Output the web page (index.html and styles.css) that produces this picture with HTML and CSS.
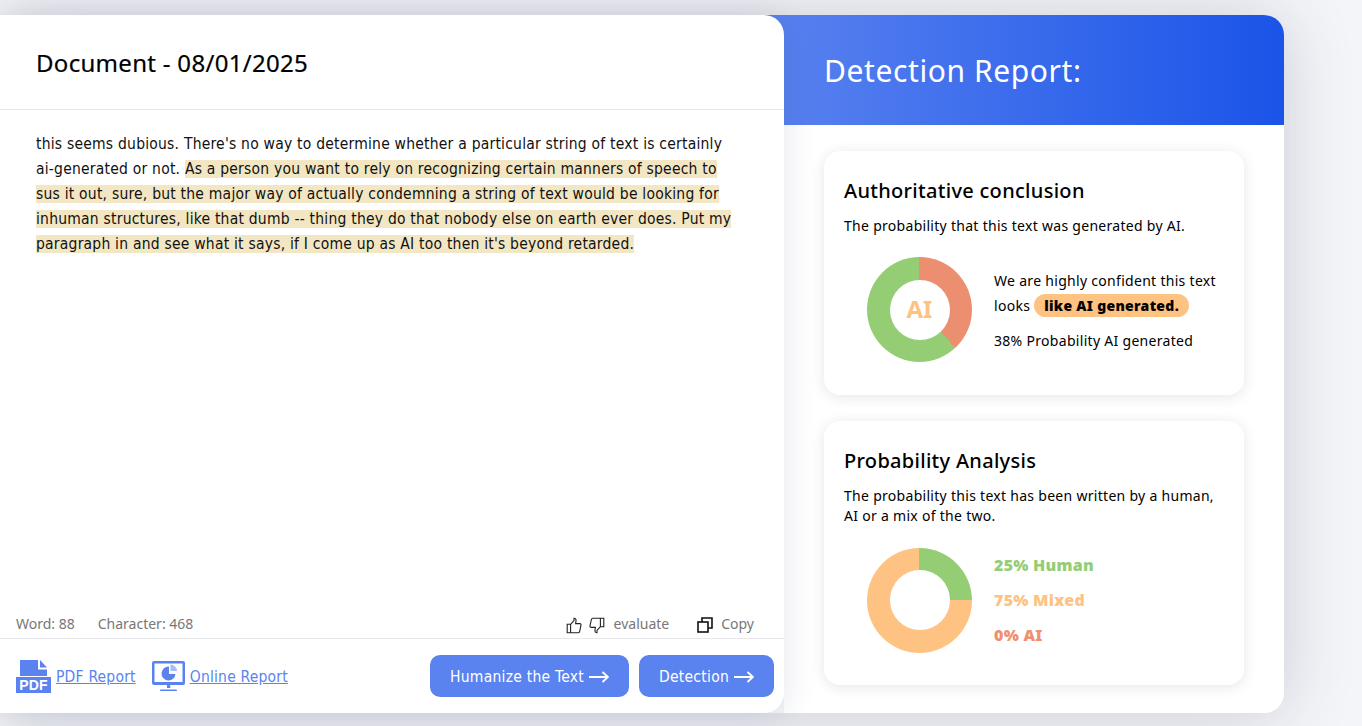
FILE: index.html
```html
<!DOCTYPE html>
<html lang="en">
<head>
<meta charset="utf-8">
<title>Detection Report</title>
<link rel="stylesheet" href="styles.css">
</head>
<body>
<main class="page">
  <section class="doc">
    <header class="doc-head"><h1>Document - 08/01/2025</h1></header>
    <div class="doc-body">
      <p>this seems dubious. There's no way to determine whether a particular string of text is certainly ai-generated or not. <mark>As a person you want to rely on recognizing certain manners of speech to sus it out, sure, but the major way of actually condemning a string of text would be looking for inhuman structures, like that dumb -- thing they do that nobody else on earth ever does. Put my paragraph in and see what it says, if I come up as AI too then it's beyond retarded.</mark></p>
    </div>
    <div class="doc-stats">
      <div class="counts"><span>Word: 88</span><span>Character: 468</span></div>
      <div class="tools">
        <svg class="ico" width="16" height="17" viewBox="0 0 16 17" fill="none" stroke="#222" stroke-width="1.1"><path d="M4.6 7.2v8.6H1.2V7.2zM4.6 7.4 8 3.6V1.2c1.6 0 2.2 1.300 2 2.800L9.600 6.600h4.200c1 0 1.400.8 1.200 1.600l-1.400 6.400c-.2.800-.7 1.200-1.500 1.200H4.600"/></svg>
        <svg class="ico thumb-down" width="16" height="17" viewBox="0 0 16 17" fill="none" stroke="#222" stroke-width="1.1"><path d="M11.400 9.800V1.200h3.400v8.600zM11.400 9.600 8 13.400v2.400c-1.600 0-2.200-1.300-2-2.800l.4-2.600H2.200c-1 0-1.400-.8-1.200-1.600l1.400-6.400c.2-.8.7-1.200 1.500-1.200h7.500"/></svg>
        <span class="tool-label">evaluate</span>
        <svg class="ico copy" width="16" height="16" viewBox="0 0 16 16" fill="none" stroke="#111" stroke-width="1.600"><rect x="1" y="5" width="10" height="10"/><path d="M5 5V1h10v10h-4"/></svg>
        <span class="tool-label copy-label">Copy</span>
      </div>
    </div>
    <footer class="doc-foot">
      <div class="links">
        <a class="link" href="#">
          <svg width="35" height="33" viewBox="0 0 35 33"><path d="M4 0h18v9.500h9V16H4z" fill="#5b83f0"/><path d="M24 0l7 7.500h-7z" fill="#5b83f0"/><rect y="17" width="35" height="16" fill="#5b83f0"/><text x="17.500" y="30" class="pdf-text">PDF</text></svg>
          <span class="link-text">PDF Report</span>
        </a>
        <a class="link" href="#">
          <svg width="33" height="31" viewBox="0 0 33 31"><path d="M2 0h29a2 2 0 0 1 2 2v20a2 2 0 0 1-2 2H2a2 2 0 0 1-2-2V2a2 2 0 0 1 2-2z" fill="#5b83f0"/><rect x="2.500" y="2.500" width="28" height="18.500" fill="#fff"/><path d="M17 5.500a7 7 0 1 0 6.500 7.500H17z" fill="#5b83f0"/><path d="M18.500 3.500a7 7 0 0 1 6.500 6.500h-6.500z" fill="#a9bdf5"/><path d="M15 24h3l.5 3h-3.500zM9 28.500h15c.500 0 1 .5 1 1.500H8c0-1 .5-1.500 1-1.500z" fill="#5b83f0"/></svg>
          <span class="link-text">Online Report</span>
        </a>
      </div>
      <div class="actions">
        <button class="btn">Humanize the Text <svg width="20" height="12" viewBox="0 0 20 12" fill="none" stroke="#fff" stroke-width="1.900"><path d="M0 6h18.500M13.500 1l5.500 5-5.500 5"/></svg></button>
        <button class="btn">Detection <svg width="20" height="12" viewBox="0 0 20 12" fill="none" stroke="#fff" stroke-width="1.900"><path d="M0 6h18.500M13.500 1l5.500 5-5.500 5"/></svg></button>
      </div>
    </footer>
  </section>
  <aside class="report">
    <header class="report-head"><h2>Detection Report:</h2></header>
    <div class="report-body">
      <article class="card card-a">
        <h3>Authoritative conclusion</h3>
        <p class="card-desc">The probability that this text was generated by AI.</p>
        <div class="chart-row">
          <div class="donut donut-ai"><span class="donut-hole donut-label">AI</span></div>
          <div class="verdict">
            <p class="verdict-text">We are highly confident this text looks <b class="pill">like AI generated.</b></p>
            <p class="verdict-prob">38% Probability AI generated</p>
          </div>
        </div>
      </article>
      <article class="card card-b">
        <h3>Probability Analysis</h3>
        <p class="card-desc">The probability this text has been written by a human, AI or a mix of the two.</p>
        <div class="chart-row">
          <div class="donut donut-mix"><span class="donut-hole"></span></div>
          <ul class="legend">
            <li class="human">25% Human</li>
            <li class="mixed">75% Mixed</li>
            <li class="ai">0% AI</li>
          </ul>
        </div>
      </article>
    </div>
  </aside>
</main>
</body>
</html>
```
FILE: styles.css
```css
* { box-sizing: border-box; }
html, body { margin: 0; height: 100%; overflow: hidden; }
body {
  background: #f4f5f8;
  font-family: "Noto Sans", sans-serif;
  color: #000;
}
h1, h2, h3, p, ul { margin: 0; padding: 0; }
.page {
  display: flex;
  align-items: stretch;
  height: 698px;
  margin-top: 15px;
  width: 1284px;
  border-radius: 0 20px 20px 0;
  box-shadow: 0 2px 70px rgba(40, 50, 90, .2);
}
.doc {
  position: relative;
  z-index: 2;
  flex: 0 0 784px;
  display: flex;
  flex-direction: column;
  background: #fff;
  border-radius: 0 20px 20px 0;
  box-shadow: 0 2px 34px rgba(40, 50, 90, .12);
}
.doc-head {
  height: 95px;
  padding: 0 36px;
  display: flex;
  align-items: center;
  border-bottom: 1px solid #e6e7eb;
}
.doc-head h1 { font-size: 24px; font-weight: 400; letter-spacing: .3px; line-height: 32px; margin-top: 1px; -webkit-text-stroke: .2px #000; }
.doc-body { flex: 1; padding: 22px 50px 0 36px; }
.doc-body p { font-family: "DejaVu Sans Condensed", "DejaVu Sans", sans-serif; font-stretch: condensed; font-size: 15.5px; letter-spacing: .22px; line-height: 25px; color: #111; }
mark { background: #f3e7c3; color: #111; }
.doc-stats {
  height: 28px;
  padding: 4px 30px 0 16px;
  display: flex;
  justify-content: space-between;
  align-items: flex-start;
  font-size: 14px;
  color: #777;
  line-height: 20px;
}
.counts { display: flex; gap: 23px; }
.tools { display: flex; align-items: center; margin-top: 2px; }
.tool-label { margin-top: -2px; margin-left: 9px; }
.copy-label { margin-left: 8px; }
.ico { display: block; }
.thumb-down { margin-left: 7px; }
.copy { margin-left: 28px; }
.doc-foot {
  height: 75px;
  border-top: 1px solid #e6e7eb;
  padding: 16px 10px 0 16px;
  display: flex;
  justify-content: space-between;
  align-items: flex-start;
}
.links { display: flex; gap: 16px; padding-top: 5px; }
.link {
  display: flex;
  align-items: center;
  gap: 5px;
  color: #5b83f0;
  font-family: "DejaVu Sans Condensed", "DejaVu Sans", sans-serif;
  font-stretch: condensed;
  font-size: 15.5px;
  letter-spacing: .2px;
}
.link-text { line-height: 20px; margin-top: 1px; }
.pdf-text { font: 700 14px "Liberation Sans", sans-serif; fill: #fff; text-anchor: middle; }
.actions { display: flex; gap: 10px; }
.btn {
  height: 42px;
  padding: 2px 20px 0;
  border: 0;
  border-radius: 10px;
  background: #5b83f0;
  color: #fff;
  font-family: "DejaVu Sans Condensed", "DejaVu Sans", sans-serif;
  font-stretch: condensed;
  font-size: 15.5px;
  letter-spacing: .25px;
  display: flex;
  align-items: center;
  gap: 5px;
}
.report {
  position: relative;
  z-index: 1;
  flex: 1;
  background: #fff;
  border-radius: 0 20px 20px 0;
}
.report-head {
  margin-left: -30px;
  height: 110px;
  padding: 0 0 0 70px;
  display: flex;
  align-items: center;
  background: linear-gradient(90deg, #5b83f0 0%, #1a54e8 100%);
  border-radius: 0 20px 0 0;
}
.report-head h2 { font-size: 30px; font-weight: 400; letter-spacing: .6px; color: #fff; line-height: 40px; margin-top: 2px; }
.report-body { padding: 26px 40px 0; display: flex; flex-direction: column; gap: 26px; }
.card {
  background: #fff;
  border-radius: 16px;
  box-shadow: 0 2px 14px rgba(40, 50, 90, .12);
  padding: 26px 20px 0;
}
.card-a { height: 244px; }
.card-b { height: 264px; }
.card h3 { font-size: 20px; font-weight: 500; letter-spacing: .3px; line-height: 28px; }
.card-desc { font-size: 14px; letter-spacing: .29px; line-height: 20px; margin-top: 11px; }
.chart-row { display: flex; align-items: center; margin-top: 21px; padding-left: 23px; }
.donut {
  flex: 0 0 105px;
  height: 105px;
  border-radius: 50%;
  display: flex;
  align-items: center;
  justify-content: center;
}
.donut-ai { background: conic-gradient(#ec8e70 0 38%, #95cd75 38% 100%); }
.donut-mix { background: conic-gradient(#95cd75 0 25%, #fec283 25% 100%); }
.donut-hole {
  width: 60px;
  height: 60px;
  border-radius: 50%;
  background: #fff;
  color: #fec283;
  font-size: 24px;
  font-weight: 700;
  display: flex;
  align-items: center;
  justify-content: center;
}
.donut-label { padding-bottom: 2px; }
.verdict { margin-left: 22px; font-size: 14px; letter-spacing: .3px; }
.verdict-text { line-height: 25px; }
.pill {
  background: #fec283;
  border-radius: 12px;
  padding: 2px 10px;
  font-weight: 900;
  letter-spacing: .3px;
}
.verdict-prob { line-height: 20px; margin-top: 13px; }
.legend { list-style: none; margin: 1px 0 0 22px; font-size: 16px; font-weight: 900; letter-spacing: .25px; }
.legend li { line-height: 35px; }
.human { color: #95cd75; }
.mixed { color: #fec283; }
.ai { color: #ee8f70; }
```
